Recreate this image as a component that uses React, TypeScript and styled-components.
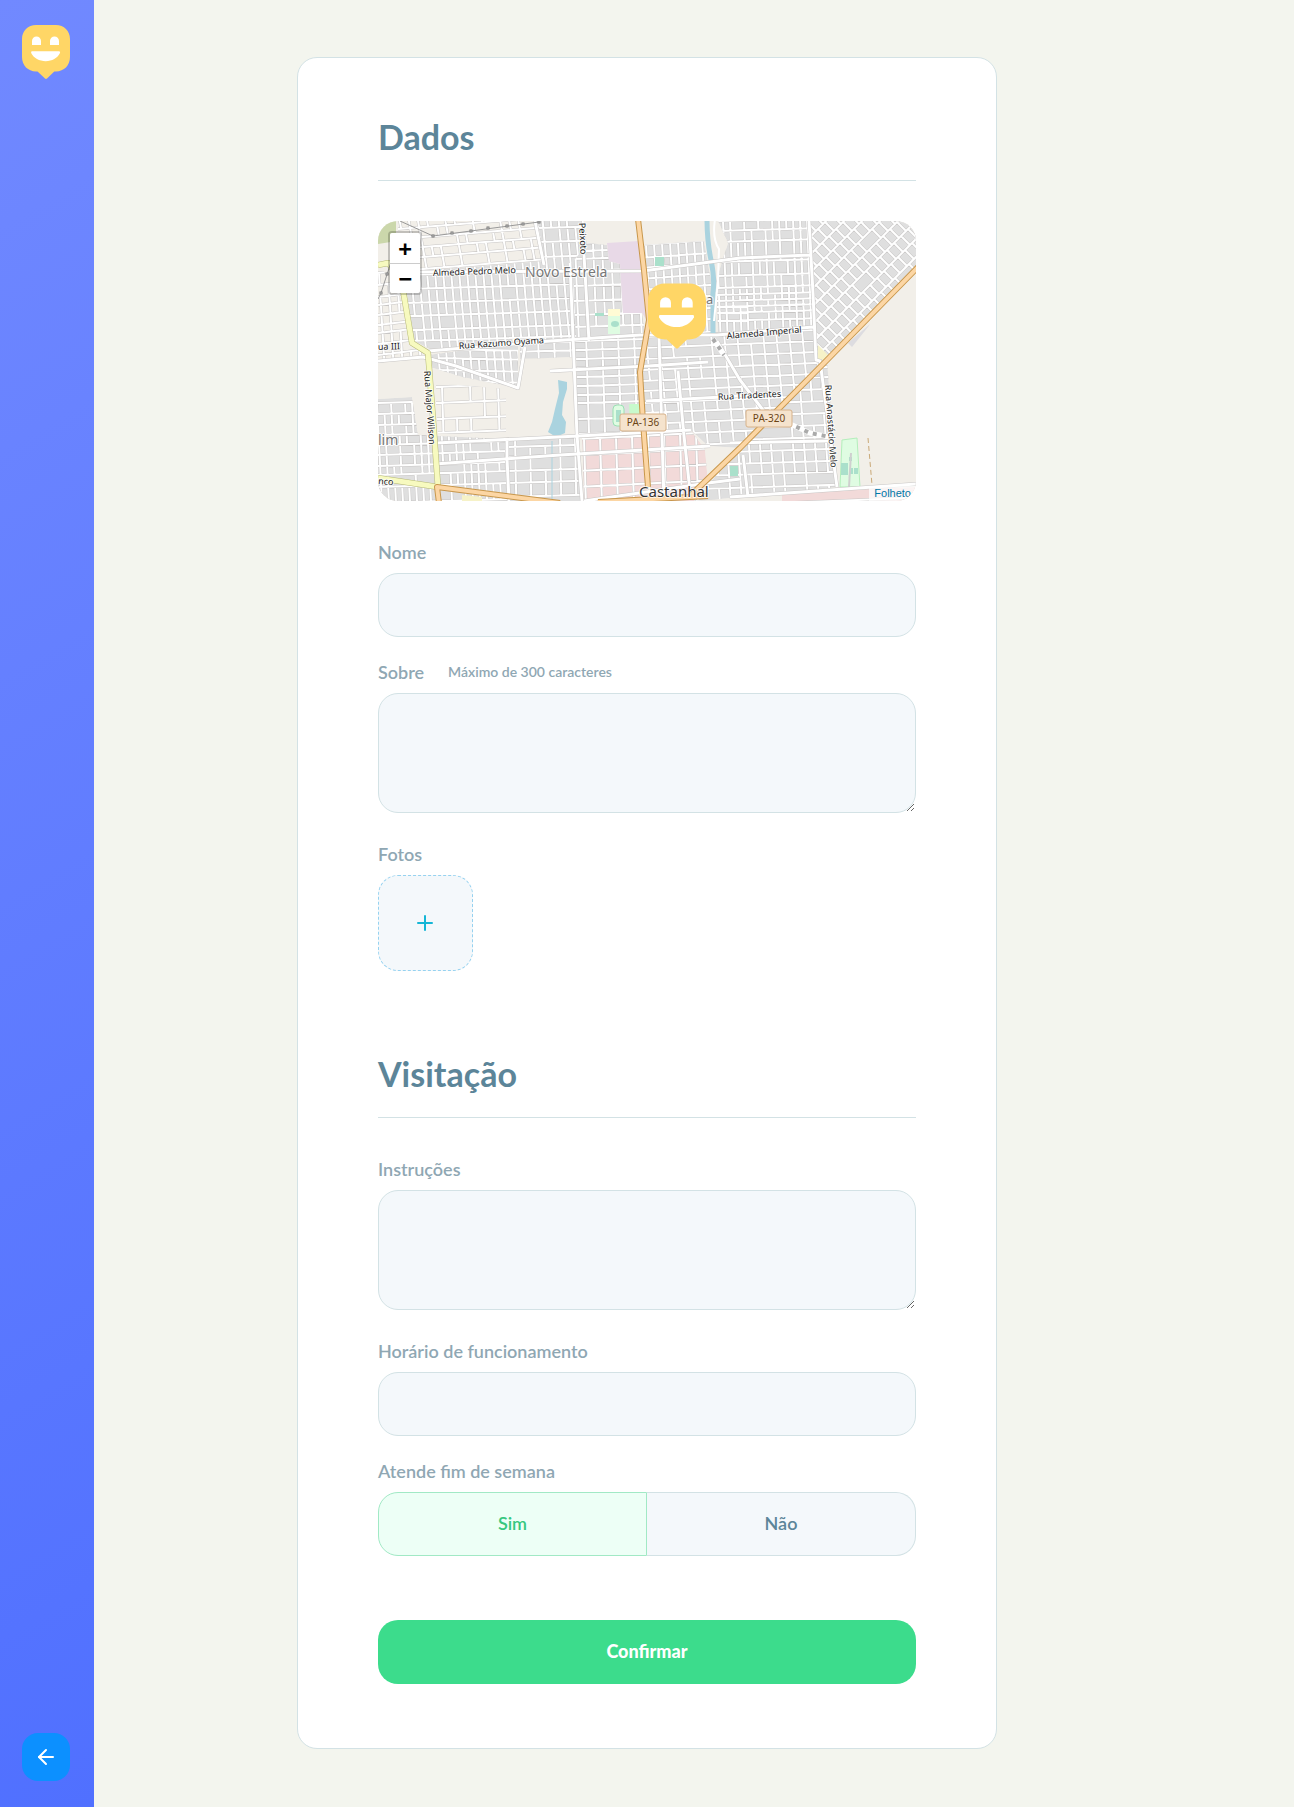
import React, { useState } from "react";
import styled, { createGlobalStyle, css } from "styled-components";
import { FiArrowLeft, FiPlus } from "react-icons/fi";

const GlobalStyle = createGlobalStyle`
  * {
    margin: 0;
    padding: 0;
    box-sizing: border-box;
  }
  body {
    background: #f3f5ee;
    color: #5c8599;
  }
  body, input, button, textarea {
    font: 600 18px Lato, "Noto Sans", sans-serif;
  }
`;

const Sidebar = styled.aside`
  position: fixed;
  inset: 0 auto 0 0;
  width: 94px;
  padding: 25px 24px 26px 22px;
  display: flex;
  flex-direction: column;
  justify-content: space-between;
  background: linear-gradient(329.54deg, #5070ff 0%, #7189ff 100%);
`;

const BackButton = styled.button`
  width: 48px;
  height: 48px;
  display: flex;
  align-items: center;
  justify-content: center;
  border: 0;
  border-radius: 16px;
  background: #0c90ff;
  color: #fff;
  cursor: pointer;
`;

const Main = styled.main`
  min-height: 100vh;
  padding: 57px 94px;
`;

const Form = styled.form`
  max-width: 700px;
  margin: 0 auto;
  padding: 64px 80px;
  background: #fff;
  border: 1px solid #d3e2e5;
  border-radius: 20px;
`;

const Fieldset = styled.fieldset`
  border: 0;
  min-width: 0;

  & + & {
    margin-top: 88px;
  }
`;

const Legend = styled.legend`
  display: block;
  width: 100%;
  margin-bottom: 40px;
  padding-bottom: 28px;
  border-bottom: 1px solid #d3e2e5;
  font-size: 34px;
  line-height: 30px;
  font-weight: 700;
  color: #5c8599;
`;

const Block = styled.div`
  & + & {
    margin-top: 24px;
  }
`;

const labelStyle = css`
  display: flex;
  margin-bottom: 10px;
  line-height: 22px;
  color: #8fa7b3;
`;

const Label = styled.label`
  ${labelStyle}
`;

const GroupLabel = styled.div`
  ${labelStyle}
`;

const Hint = styled.span`
  margin-left: 24px;
  font-size: 14px;
  line-height: 22px;
`;

const fieldStyle = css`
  display: block;
  width: 100%;
  background: #f4f8fb;
  border: 1px solid #d3e2e5;
  border-radius: 20px;
  outline: none;
  color: #5c8599;
`;

const Input = styled.input`
  ${fieldStyle}
  height: 64px;
  padding: 0 16px;
`;

const TextArea = styled.textarea`
  ${fieldStyle}
  min-height: 120px;
  max-height: 240px;
  height: 120px;
  margin-bottom: 30px;
  padding: 16px;
  line-height: 28px;
  resize: vertical;
`;

const Photos = styled.div`
  display: grid;
  grid-template-columns: repeat(5, 1fr);
  gap: 16px;
`;

const AddPhoto = styled.label`
  height: 96px;
  display: flex;
  align-items: center;
  justify-content: center;
  background: #f4f8fb;
  border: 1px dashed #96d2f0;
  border-radius: 20px;
  color: #15b6d6;
  cursor: pointer;
`;

const FileInput = styled.input`
  position: absolute;
  width: 1px;
  height: 1px;
  opacity: 0;
`;

const Choices = styled.div`
  display: grid;
  grid-template-columns: 1fr 1fr;
`;

const Choice = styled.button<{ $active: boolean }>`
  height: 64px;
  padding-bottom: 2px;
  border: 1px solid ${(p) => (p.$active ? "#a1e9c5" : "#d3e2e5")};
  background: ${(p) => (p.$active ? "#edfff6" : "#f4f8fb")};
  color: ${(p) => (p.$active ? "#37c77f" : "#5c8599")};
  cursor: pointer;

  &:first-child {
    border-radius: 20px 0 0 20px;
    ${(p) => !p.$active && "border-right: 0;"}
  }
  &:last-child {
    border-radius: 0 20px 20px 0;
    ${(p) => !p.$active && "border-left: 0;"}
  }
`;

const Confirm = styled.button`
  width: 100%;
  height: 64px;
  margin-top: 64px;
  padding-bottom: 2px;
  border: 0;
  border-radius: 20px;
  background: #3cdc8c;
  color: #fff;
  font-weight: 900;
  cursor: pointer;
`;

const MapBox = styled.div`
  position: relative;
  height: 280px;
  margin-bottom: 40px;
  border-radius: 20px;
  overflow: hidden;
  background: #f2efe9;
`;

const MapSvg = styled.svg`
  display: block;
  width: 100%;
  height: 100%;
`;

const ZoomBar = styled.div`
  position: absolute;
  top: 10px;
  left: 10px;
  border: 2px solid rgba(0, 0, 0, 0.2);
  border-radius: 4px;
  background-clip: padding-box;
  overflow: hidden;
`;

const ZoomButton = styled.button`
  display: block;
  width: 30px;
  height: 30px;
  border: 0;
  background: #fff;
  color: #000;
  font: bold 22px "DejaVu Sans Mono", monospace;
  line-height: 29px;
  cursor: pointer;

  & + & {
    border-top: 1px solid #ccc;
  }
`;

const Attribution = styled.div`
  position: absolute;
  right: 0;
  bottom: 0;
  padding: 0 5px;
  background: rgba(255, 255, 255, 0.7);
  font: 11px "Liberation Sans", Arial, sans-serif;
  line-height: 15px;
`;

const AttributionLink = styled.a`
  color: #0078a8;
  text-decoration: none;
`;

type Pt = [number, number];

const HappyPin = (props: React.SVGProps<SVGSVGElement>) => (
  <svg viewBox="0 0 48 54" {...props}>
    <path
      fill="#ffd666"
      d="M14 0H34C42 0 48 6 48 14V32C48 40.500 42 46.400 34 46.400H32.300L25 53.500Q24 54.400 23 53.500L15.500 46.400H14C6 46.400 0 40.500 0 32V14C0 6 6 0 14 0Z"
    />
    <path fill="#fff" d="M10 20V16a4.500 4.500 0 0 1 9 0V20ZM28 20V16a4.500 4.500 0 0 1 9 0V20Z" />
    <path fill="#fff" d="M10 26.200H37Q38.600 26.300 38 28C35.500 33 30 36.200 23.700 36.200S11.500 33 9.200 28Q8.600 26.300 10 26.200Z" />
  </svg>
);

interface Region {
  id: string;
  area: string;
  fill: string;
  x: [number, number, number];
  rows: number[];
  slope: number;
  lean: number;
  skip: number;
}

const regions: Region[] = [
  { id: "nw", area: "18,0 162,0 166,42 40,50 18,22", fill: "#f2efe9", x: [20, 170, 9], rows: [-4, 8, 18, 28, 38, 50], slope: -0.08, lean: 0.18, skip: 0.3 },
  { id: "w", area: "0,46 26,68 34,122 50,134 0,142", fill: "#f2efe9", x: [0, 56, 9], rows: [52, 64, 76, 84, 94, 104, 112, 123, 134, 143], slope: -0.12, lean: 0.06, skip: 0.3 },
  { id: "n", area: "160,0 206,0 209,24 196,42 198,118 52,128 36,120 28,68 40,50 166,40", fill: "#dfdfdf", x: [28, 205, 8], rows: [-4, 11, 25, 40, 54, 68, 82, 95, 109, 120, 130], slope: -0.03, lean: 0.09, skip: 0.06 },
  { id: "nc", area: "194,42 209,22 229,24 231,40 242,43 245,92 264,92 268,118 198,120", fill: "#dfdfdf", x: [196, 270, 9], rows: [22, 30, 38, 50, 65, 80, 94, 106, 120], slope: -0.03, lean: 0.04, skip: 0.08 },
  { id: "ne1", area: "264,24 326,20 333,60 335,112 270,114 268,60", fill: "#dfdfdf", x: [260, 336, 8], rows: [24, 37, 47, 58, 69, 80, 92, 103, 116], slope: -0.07, lean: 0.06, skip: 0.08 },
  { id: "ne2", area: "340,0 431,0 435,106 340,113 338,60 350,22", fill: "#dfdfdf", x: [339, 440, 7], rows: [0, 10, 21, 41, 55, 67, 74, 80, 86, 92, 100, 116], slope: -0.03, lean: 0.04, skip: 0.14 },
  { id: "midw", area: "50,134 140,122 140,167 84,156 52,146", fill: "#dfdfdf", x: [60, 146, 8], rows: [128, 137, 149, 160, 172], slope: 0.02, lean: 0.08, skip: 0.1 },
  { id: "oldw", area: "0,178 34,176 40,214 128,218 130,280 0,280", fill: "#dfdfdf", x: [0, 136, 7], rows: [182, 193, 204, 214, 224, 234, 245, 254, 266, 282], slope: -0.03, lean: 0.05, skip: 0.32 },
  { id: "beigew", area: "56,162 128,168 128,216 60,212", fill: "#f2efe9", x: [58, 132, 14], rows: [166, 182, 198, 212], slope: -0.04, lean: 0.03, skip: 0.3 },
  { id: "sw", area: "128,220 200,214 204,280 130,280", fill: "#dfdfdf", x: [130, 206, 15], rows: [218, 226, 236, 250, 262, 276], slope: -0.03, lean: 0.02, skip: 0.1 },
  { id: "mid", area: "142,122 270,114 266,214 200,216 198,136 142,138", fill: "#dfdfdf", x: [136, 268, 16], rows: [114, 122, 131, 140, 149, 158, 167, 176, 184, 200, 215], slope: -0.03, lean: 0.03, skip: 0.04 },
  { id: "pink", area: "204,217 313,210 327,228 330,262 316,280 206,280", fill: "#f2dad9", x: [198, 340, 16], rows: [218, 234, 250, 266, 282], slope: -0.05, lean: 0.03, skip: 0.03 },
  { id: "mide", area: "270,114 437,106 449,139 362,227 330,225 314,210 266,213 264,150", fill: "#dfdfdf", x: [263, 452, 13], rows: [116, 127, 138, 149, 160, 170, 182, 192, 203, 214, 226], slope: -0.04, lean: 0.09, skip: 0.12 },
  { id: "se", area: "449,139 459,266 405,273 316,280 362,227", fill: "#dfdfdf", x: [318, 462, 11], rows: [140, 150, 160, 172, 184, 196, 208, 220, 232, 244, 255, 268, 280], slope: -0.03, lean: 0.07, skip: 0.3 },
  { id: "pinkse", area: "404,273 490,268 538,266 538,280 404,280", fill: "#f2dad9", x: [404, 540, 19], rows: [282], slope: -0.04, lean: 0.03, skip: 0.1 },
];

const chance = (a: number, b: number) => {
  const n = Math.sin(a * 127.1 + b * 311.7) * 43758.5453;
  return n - Math.floor(n);
};

const streets = (r: Region) => {
  const [x0, x1, step] = r.x;
  let d = "";
  r.rows.forEach((y, i) => {
    const end = y + r.slope * (x1 - x0);
    d += `M${x0} ${y}L${x1} ${end.toFixed(1)}`;
    const next = r.rows[i + 1];
    if (next === undefined) return;
    for (let x = x0 - 8, k = 0; x < x1; x += step, k++) {
      if (chance(i + x0, k) < r.skip) continue;
      const top = y + r.slope * (x - x0);
      const bottom = next + r.slope * (x - x0);
      const shift = r.lean * (y - r.rows[0]);
      const shiftEnd = r.lean * (next - r.rows[0]);
      d += `M${(x + shift).toFixed(1)} ${top.toFixed(1)}L${(x + shiftEnd).toFixed(1)} ${bottom.toFixed(1)}`;
    }
  });
  return d;
};

const diagonalStreets = () => {
  let d = "";
  for (let row = 0; row < 10; row++) {
    const c = 430 + row * 18;
    d += `M${c - 170} 170L${c + 20} -20`;
    for (let k = 0; k < 32; k++) {
      if (chance(row, k) < 0.03) continue;
      const s = k * 7 - 20;
      d += `M${c - s} ${s}l9 9`;
    }
  }
  return d;
};

const mainRoads =
  "M42 51L265 50L362 37L432 34M50 130L172 120L262 114L339 114L435 106M431 0L435 72L438 139L442 140L459 266M192 42L199 214L204 280M57 243L182 234L332 225M58 222L200 215L313 209M129 219V237L131 280M352 276L538 263M365 234L370 276M339 120L362 159L385 189L392 200M0 140L45 136L78 145L140 167L147 126M172 150L270 145L330 141M206 280L330 262L362 258M157 0L166 44M206 34L211 120M281 116L286 280M300 150L306 215L312 270M268 180L345 176L400 172M352 222L450 220";

const yellowRoad = "M0 44L10 42L22 56L25 69L34 122L50 132L54 184L60 266L0 257";
const orangeRoad =
  "M260 -2L266 49L271 99L262 151L265 201L270 266M540 46L449 139L362 227L312 275M61 282L59 266L182 282M220 281L330 275";

interface MapLabel {
  x: number;
  y: number;
  text: string;
  size: number;
  turn?: number;
  color?: string;
}

const mapLabels: MapLabel[] = [
  { x: 55, y: 55, text: "Almeda Pedro Melo", size: 9, turn: -2 },
  { x: 147, y: 56, text: "Novo Estrela", size: 14, color: "#777" },
  { x: 201, y: 2, text: "Peixoto", size: 9, turn: 87 },
  { x: 81, y: 128, text: "Rua Kazumo Oyama", size: 9, turn: -4 },
  { x: 0, y: 129, text: "ua III", size: 9, turn: -2 },
  { x: 46, y: 150, text: "Rua Major Wilson", size: 9, turn: 86 },
  { x: 0, y: 224, text: "lim", size: 14, color: "#777" },
  { x: 0, y: 263, text: "nco", size: 9, turn: 5 },
  { x: 328, y: 83, text: "a", size: 13, color: "#777" },
  { x: 349, y: 118, text: "Alameda Imperial", size: 9, turn: -5 },
  { x: 340, y: 179, text: "Rua Tiradentes", size: 9, turn: -3 },
  { x: 447, y: 164, text: "Rua Anastácio Melo", size: 9, turn: 86 },
  { x: 261, y: 276, text: "Castanhal", size: 15, color: "#333" },
];

const railPosts: Pt[] = [[55, 15], [74, 12], [93, 10], [110, 7], [129, 5], [145, 3], [161, 1], [9, 53], [3, 72]];

const CityMap = () => (
  <MapSvg viewBox="0 0 538 280" preserveAspectRatio="xMidYMid slice" role="img" aria-label="Mapa de Castanhal">
    <defs>
      {regions.map((r) => (
        <clipPath key={r.id} id={`area-${r.id}`}>
          <polygon points={r.area} />
        </clipPath>
      ))}
      <clipPath id="area-diag">
        <polygon points="431,0 538,0 538,48 449,139 438,128" />
      </clipPath>
    </defs>
    <rect width="538" height="280" fill="#f2efe9" />
    <polygon points="0,0 18,0 19,20 0,23" fill="#cbd7ab" />
    {regions.map((r) => {
      const d = streets(r);
      return (
        <g key={r.id} clipPath={`url(#area-${r.id})`} fill="none">
          <polygon points={r.area} fill={r.fill} />
          <path d={d} stroke="#c8c6c5" strokeWidth="3" />
          <path d={d} stroke="#fff" strokeWidth="2" />
        </g>
      );
    })}
    <g clipPath="url(#area-diag)" fill="none">
      <rect x="420" width="130" height="150" fill="#dfdfdf" />
      <path d={diagonalStreets()} stroke="#c8c6c5" strokeWidth="3" />
      <path d={diagonalStreets()} stroke="#fff" strokeWidth="2" />
    </g>
    <polygon points="470,122 492,103 490,106 474,126" fill="#dddce0" />
    <polygon points="229,22 261,20 268,98 264,92 245,92 242,43 231,40" fill="#e8d9e7" />
    <rect x="277" y="36" width="9" height="9" fill="#aae0cb" />
    <rect x="230" y="88" width="12" height="7" fill="#fffbd5" />
    <rect x="230" y="95" width="12" height="18" fill="#dffce2" />
    <ellipse cx="237" cy="103" rx="4" ry="3" fill="#aae0cb" />
    <rect x="217" y="92" width="9" height="3" fill="#aae0cb" />
    <rect x="235" y="184" width="11" height="21" rx="4" fill="#dffce2" stroke="#9be0b4" />
    <rect x="238" y="189" width="5" height="12" fill="#aae0cb" />
    <path d="M251 183H263V212H252Z" fill="#c8facc" />
    <rect x="352" y="245" width="8" height="10" fill="#aae0cb" />
    <polygon points="440,124 450,134 446,139 439,138" fill="#f6f2c8" />
    <polygon points="84,274 104,276 104,280 84,280" fill="#f6f2c8" />
    <polygon points="464,219 479,217 482,266 462,266" fill="#dffce2" stroke="#b3eebb" />
    <path d="M463 242h7v12h-7zM472 247h3v6h-3zM476 247h4v6h-4zM471 236h3v4h-3z" fill="#aae0cb" />
    <path d="M473 232L471 266" stroke="#cfcfcf" strokeWidth="2" />
    <path d="M490 217L494 264" stroke="#c9a877" strokeDasharray="5 3" />
    <polygon
      points="180,159 189,161 189,168 185,181 184,194 188,201 187,212 178,216 170,211 174,201 177,188 181,172"
      fill="#aad3df"
    />
    <path d="M174 220V280" stroke="#aad3df" strokeWidth="1" />
    <path d="M329 -2Q329 20 333 39T335 72V114" fill="none" stroke="#aad3df" strokeWidth="5" />
    <path d="M337 -2Q334 18 341 28L340 60L336 100" fill="none" stroke="#fff" strokeWidth="2" />
    <g fill="none" strokeLinejoin="round">
      <path d={mainRoads} stroke="#c8c6c5" strokeWidth="4" />
      <path d={mainRoads} stroke="#fff" strokeWidth="3" />
      <path d={yellowRoad} stroke="#b6b976" strokeWidth="6" />
      <path d={yellowRoad} stroke="#f7fabf" strokeWidth="5" />
      <path d={orangeRoad} stroke="#c8974c" strokeWidth="6" />
      <path d={orangeRoad} stroke="#fcd6a4" strokeWidth="4" />
      <path d="M22 0L55 15L161 1M14 38L3 72L0 78" stroke="#999" />
      <path d="M335 118L346 134M410 202L432 212L452 216" stroke="#fff" strokeWidth="5" />
      <path d="M335 118L346 134M410 202L432 212L452 216" stroke="#aaa" strokeWidth="4" strokeDasharray="4 5" />
    </g>
    {railPosts.map(([x, y]) => (
      <rect key={`${x}-${y}`} x={x - 1} y={y - 1} width="2" height="2" fill="#fff" stroke="#777" />
    ))}
    <g fontFamily="Noto Sans, sans-serif" fontWeight="400" paintOrder="stroke" stroke="#fff" strokeOpacity="0.8" strokeWidth="2" strokeLinejoin="round">
      {mapLabels.map((l) => (
        <text key={l.text} fontSize={l.size} fill={l.color ?? "#222"} transform={`translate(${l.x} ${l.y}) rotate(${l.turn ?? 0})`}>
          {l.text}
        </text>
      ))}
    </g>
    {([[242, 193, "PA-136"], [368, 189, "PA-320"]] as [number, number, string][]).map(([x, y, text]) => (
      <g key={text}>
        <rect x={x} y={y} width="46" height="17" rx="2" fill="#f5e3cd" stroke="#d7b28a" />
        <text x={x + 23} y={y + 12} textAnchor="middle" fontFamily="Noto Sans, sans-serif" fontWeight="400" fontSize="10" fill="#6b4516">
          {text}
        </text>
      </g>
    ))}
    <HappyPin x="270" y="62" width="58" height="66" />
  </MapSvg>
);

export default function App() {
  const [weekends, setWeekends] = useState(true);

  return (
    <>
      <GlobalStyle />
      <Sidebar>
        <HappyPin width="48" height="54" role="img" aria-label="Happy" />
        <BackButton type="button" aria-label="Voltar">
          <FiArrowLeft size={24} />
        </BackButton>
      </Sidebar>
      <Main>
        <Form onSubmit={(e) => e.preventDefault()}>
          <Fieldset>
            <Legend>Dados</Legend>
            <MapBox>
              <CityMap />
              <ZoomBar>
                <ZoomButton type="button" aria-label="Aproximar">+</ZoomButton>
                <ZoomButton type="button" aria-label="Afastar">−</ZoomButton>
              </ZoomBar>
              <Attribution>
                <AttributionLink href="#mapa">Folheto</AttributionLink>
              </Attribution>
            </MapBox>
            <Block>
              <Label htmlFor="name">Nome</Label>
              <Input id="name" />
            </Block>
            <Block>
              <Label htmlFor="about">
                Sobre <Hint>Máximo de 300 caracteres</Hint>
              </Label>
              <TextArea id="about" maxLength={300} />
            </Block>
            <Block>
              <GroupLabel id="photos-label">Fotos</GroupLabel>
              <Photos>
                <AddPhoto>
                  <FiPlus size={24} />
                  <FileInput type="file" multiple aria-labelledby="photos-label" />
                </AddPhoto>
              </Photos>
            </Block>
          </Fieldset>
          <Fieldset>
            <Legend>Visitação</Legend>
            <Block>
              <Label htmlFor="instructions">Instruções</Label>
              <TextArea id="instructions" />
            </Block>
            <Block>
              <Label htmlFor="hours">Horário de funcionamento</Label>
              <Input id="hours" />
            </Block>
            <Block>
              <GroupLabel id="weekends-label">Atende fim de semana</GroupLabel>
              <Choices role="group" aria-labelledby="weekends-label">
                <Choice type="button" $active={weekends} aria-pressed={weekends} onClick={() => setWeekends(true)}>
                  Sim
                </Choice>
                <Choice type="button" $active={!weekends} aria-pressed={!weekends} onClick={() => setWeekends(false)}>
                  Não
                </Choice>
              </Choices>
            </Block>
          </Fieldset>
          <Confirm type="submit">Confirmar</Confirm>
        </Form>
      </Main>
    </>
  );
}
